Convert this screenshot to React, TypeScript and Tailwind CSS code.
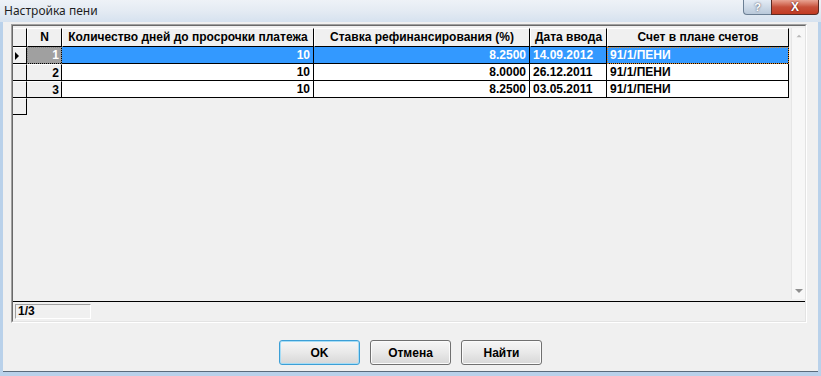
import { ChevronUp } from 'lucide-react';

const cols = [
  { key: 'n', w: 'w-[35px]', label: 'N' },
  { key: 'days', w: 'w-[252px]', label: 'Количество дней до просрочки платежа' },
  { key: 'rate', w: 'w-[216px]', label: 'Ставка рефинансирования (%)' },
  { key: 'date', w: 'w-[77px]', label: 'Дата ввода' },
  { key: 'acc', w: 'w-[182px]', label: 'Счет в плане счетов' },
];

const rows = [
  { n: '1', days: '10', rate: '8.2500', date: '14.09.2012', acc: '91/1/ПЕНИ' },
  { n: '2', days: '10', rate: '8.0000', date: '26.12.2011', acc: '91/1/ПЕНИ' },
  { n: '3', days: '10', rate: '8.2500', date: '03.05.2011', acc: '91/1/ПЕНИ' },
];

function Indicator({ active, header }: { active?: boolean; header?: boolean }) {
  return (
    <div
      className={`w-[14px] shrink-0 bg-[#f0f0f0] border-t border-t-white border-r border-r-black border-b border-b-black flex items-center justify-start pl-[2px] ${header ? 'h-[19px]' : 'h-[17px]'}`}
    >
      {active && <span className="block w-0 h-0 border-y-[4px] border-y-transparent border-l-[4px] border-l-black" />}
    </div>
  );
}

function Btn({ label, primary }: { label: string; primary?: boolean }) {
  return (
    <button
      className={`w-[81px] h-[25px] rounded-[3px] border text-[12px] font-bold text-black bg-gradient-to-b from-[#f6f6f6] via-[#e9e9e9] to-[#d7d7d7] ${
        primary ? 'border-[#3c9fd6] shadow-[inset_0_0_0_1px_#a6dcf5]' : 'border-[#707070] shadow-[inset_0_0_0_1px_#fbfbfb]'
      }`}
    >
      {label}
    </button>
  );
}

export default function App() {
  return (
    <div className="w-[821px] h-[376px] bg-[#b9d1ea] flex flex-col overflow-hidden font-['Liberation_Sans',Arial,sans-serif]">
      {/* title bar */}
      <div className="h-[22px] shrink-0 flex items-start justify-between bg-gradient-to-b from-[#eef2f7] via-[#e4ebf3] to-[#d6e2ef]">
        <span className="mt-[3px] ml-[4px] text-[12px] leading-[15px] text-[#1e1e1e] font-['Noto_Sans',sans-serif]">Настройка пени</span>
        <div className="flex mr-[2px]">
          <div className="w-[28px] h-[15px] rounded-bl-[4px] border border-[#6b7f94] border-t-0 border-r-0 bg-gradient-to-b from-[#e4ecf5] to-[#b9c9da] flex items-center justify-center text-[11px] font-bold text-white [text-shadow:0_0_2px_#334]">
            ?
          </div>
          <div className="w-[48px] h-[15px] rounded-br-[4px] border border-[#5b2a22] border-t-0 bg-gradient-to-b from-[#e8a393] via-[#c7503a] to-[#c23a22] flex items-center justify-center text-[12px] font-bold text-white [text-shadow:0_0_2px_#400]">
            X
          </div>
        </div>
      </div>

      {/* client area */}
      <div className="ml-[3px] mr-[3px] h-[350px] bg-[#f0f0f0] border-b border-b-[#5a6b7c] flex flex-col">
        <div className="mt-[2px] ml-[8px] w-[796px] h-[299px] border border-[#a0a0a0] border-r-white border-b-white">
          <div className="h-[297px] border border-[#696969] border-r-[#e3e3e3] border-b-[#e3e3e3] flex flex-col">
            <div className="flex h-[276px] border-b border-b-black">
              <div className="w-[776px] flex flex-col pt-[2px]">
                {/* header */}
                <div className="flex">
                  <Indicator header />
                  {cols.map((c) => (
                    <div
                      key={c.key}
                      className={`${c.w} h-[19px] shrink-0 bg-[#f0f0f0] border-l border-l-white border-t border-t-white border-r border-r-black border-b border-b-black text-center text-[12px] font-bold leading-[16px] whitespace-nowrap overflow-hidden`}
                    >
                      {c.label}
                    </div>
                  ))}
                </div>
                {rows.map((r, i) => {
                  const sel = i === 0;
                  const cell = sel ? 'bg-[#3399ff] text-white' : 'bg-white text-black';
                  return (
                    <div key={r.n} className="flex">
                      <Indicator active={sel} />
                      <div
                        className={`w-[35px] h-[17px] shrink-0 border-r border-r-black border-b border-b-black text-right pr-[2px] text-[12px] font-bold leading-[16px] ${
                          sel ? 'bg-[#a0a0a0] text-white outline-dotted outline-1 -outline-offset-1 outline-[#888]' : 'bg-[#f0f0f0] text-black border-t border-t-white'
                        }`}
                      >
                        {r.n}
                      </div>
                      <div className={`w-[252px] h-[17px] shrink-0 border-r border-r-black border-b border-b-black text-right pr-[3px] text-[12px] font-bold leading-[16px] ${cell}`}>
                        {r.days}
                      </div>
                      <div className={`w-[216px] h-[17px] shrink-0 border-r border-r-black border-b border-b-black text-right pr-[3px] text-[12px] font-bold leading-[16px] ${cell}`}>
                        {r.rate}
                      </div>
                      <div className={`w-[77px] h-[17px] shrink-0 border-r border-r-black border-b border-b-black pl-[3px] text-[12px] font-bold leading-[16px] ${cell}`}>
                        {r.date}
                      </div>
                      <div className={`w-[182px] h-[17px] shrink-0 border-r border-r-black border-b border-b-black pl-[3px] text-[12px] font-bold leading-[16px] ${cell} ${sel ? 'outline-dotted outline-1 -outline-offset-1 outline-[#e08a2c]' : ''}`}>
                        {r.acc}
                      </div>
                    </div>
                  );
                })}
                <div className="flex">
                  <Indicator />
                </div>
              </div>
              {/* scrollbar */}
              <div className="ml-[2px] w-[16px] h-[271px] mt-[2px] bg-[#f7f7f7] border-l border-l-[#e6e6e6] flex flex-col justify-between items-center py-[2px]">
                <ChevronUp size={10} strokeWidth={0} fill="#b8b8b8" className="mt-[1px]" />
                <span className="block w-0 h-0 border-x-[4px] border-x-transparent border-t-[4px] border-t-[#8f8f8f] mb-[4px]" />
              </div>
            </div>
            {/* status */}
            <div className="flex items-start pt-[2px] pl-[2px]">
              <div className="w-[76px] h-[15px] border border-[#a0a0a0] border-r-white border-b-white pl-[2px] text-[12px] font-bold leading-[13px]">
                1/3
              </div>
            </div>
          </div>
        </div>

        <div className="mt-[17px] ml-[276px] flex gap-[10px]">
          <Btn label="OK" primary />
          <Btn label="Отмена" />
          <Btn label="Найти" />
        </div>
      </div>
    </div>
  );
}
